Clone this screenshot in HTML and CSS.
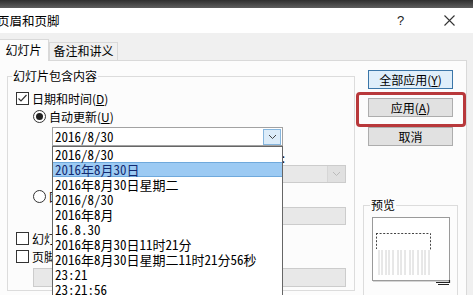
FILE: index.html
```html
<html>
  <head>
    <title>页眉和页脚</title>
    <meta charset="utf-8">
    <link rel="stylesheet" href="styles.css">
  </head>
  <body>
    <div class="topbar"></div>
    <div class="titlebar">
      <span class="title">页眉和页脚</span>
      <span class="help">?</span>
      <svg class="close" width="11" height="11" viewBox="0 0 11 11"><path d="M0.5 0.5 L10.5 10.5 M10.5 0.5 L0.5 10.5" stroke="#333" stroke-width="1.1"/></svg>
    </div>

    <div class="tabs">
      <div class="tab active">幻灯片</div>
      <div class="tab">备注和讲义</div>
    </div>

    <div class="panel">
      <fieldset class="group content">
        <legend>幻灯片包含内容</legend>
        <div class="fields">
          <div class="row r-date">
            <svg class="box" width="13" height="13" viewBox="0 0 13 13"><rect x="0.5" y="0.5" width="12" height="12" fill="#fff" stroke="#333"/><path d="M2.5 6.5 L5 9 L10.5 3" fill="none" stroke="#333" stroke-width="1.2"/></svg>
            <span>日期和时间(<u>D</u>)</span>
          </div>
          <div class="row sub r-auto">
            <svg class="radio" width="13" height="13" viewBox="0 0 13 13"><circle cx="6.5" cy="6.5" r="6" fill="#fff" stroke="#333"/><circle cx="6.5" cy="6.5" r="3.5" fill="#222"/></svg>
            <span>自动更新(<u>U</u>)</span>
          </div>
          <div class="combo-wrap">
            <div class="combo main">
              <span class="value">2016/8/30</span>
              <span class="arrow"><svg width="9" height="6" viewBox="0 0 9 6"><path d="M1 1 L4.5 4.5 L8 1" stroke="#444" fill="none"/></svg></span>
            </div>
            <ul class="droplist">
              <li>2016/8/30</li>
              <li class="picked">2016年8月30日</li>
              <li>2016年8月30日星期二</li>
              <li>2016/8/30</li>
              <li>2016年8月</li>
              <li>16.8.30</li>
              <li>2016年8月30日11时21分</li>
              <li>2016年8月30日星期二11时21分56秒</li>
              <li>23:21</li>
              <li>23:21:56</li>
            </ul>
          </div>
          <div class="lang-grid">
            <span>语言(国家/地区)(<u>L</u>):</span>
            <span>日历类型(<u>C</u>):</span>
            <div class="combo off">中文(中国)<span class="arrow"><svg width="9" height="6" viewBox="0 0 9 6"><path d="M1 1 L4.5 4.5 L8 1" stroke="#bbb" fill="none"/></svg></span></div>
            <div class="combo off">公历<span class="arrow"><svg width="9" height="6" viewBox="0 0 9 6"><path d="M1 1 L4.5 4.5 L8 1" stroke="#bbb" fill="none"/></svg></span></div>
          </div>
          <div class="row sub r-fixed">
            <svg class="radio" width="13" height="13" viewBox="0 0 13 13"><circle cx="6.5" cy="6.5" r="6" fill="#fff" stroke="#333"/></svg>
            <span>固定(<u>X</u>)</span>
          </div>
          <div class="textbox fixed-box">2016/8/30</div>
          <div class="row r-num">
            <svg class="box" width="13" height="13" viewBox="0 0 13 13"><rect x="0.5" y="0.5" width="12" height="12" fill="#fff" stroke="#333"/></svg>
            <span>幻灯片编号(<u>N</u>)</span>
          </div>
          <div class="row r-foot">
            <svg class="box" width="13" height="13" viewBox="0 0 13 13"><rect x="0.5" y="0.5" width="12" height="12" fill="#fff" stroke="#333"/></svg>
            <span>页脚(<u>F</u>)</span>
          </div>
          <div class="textbox foot-box"></div>
        </div>
      </fieldset>

      <div class="side">
        <button class="btn default">全部应用(<u>Y</u>)</button>
        <span class="mark"><button class="btn">应用(<u>A</u>)</button></span>
        <button class="btn cancel">取消</button>

        <fieldset class="group preview">
          <legend>预览</legend>
          <svg class="page" width="80" height="72" viewBox="0 0 80 72">
            <rect x="0.5" y="0.5" width="77" height="63" fill="#fff" stroke="#9a9a9a"/>
            <path d="M1 64.5 H78" stroke="#d4d4d4"/>
            <path d="M4.5 16 V32 M4 16.5 H58.5 V33" fill="none" stroke="#444" stroke-dasharray="2 1.6"/>
            <path d="M7 33 V58 M10 33 V58 M14 33 V58 M17 33 V58 M21 33 V58 M26 33 V58 M29 33 V58 M33 33 V58 M38 33 V58 M41 33 V58 M46 33 V58 M50 33 V58 M53 33 V58 M57 33 V58" stroke="#d0d0d0"/>
            <path d="M64 65.5 H77.5 V63 M66 67.5 H77" stroke="#222" stroke-width="1.2" fill="none"/>
          </svg>
        </fieldset>
      </div>
    </div>
  </body>
</html>
```

FILE: styles.css
```css
*{
  box-sizing: border-box;
}

body{
  margin: 0;
  width: 473px;
  height: 295px;
  overflow: hidden;
  background-color: #f0f0f0;
  color: #000;
  font-family: "Noto Sans CJK SC", "Microsoft YaHei", sans-serif;
  font-size: 12px;
}

u{
  text-decoration-thickness: 1px;
  text-underline-offset: 1px;
}

/* window chrome */
.topbar{
  height: 8px;
  background: linear-gradient(#2f2f2f, #5e5e5e);
}

.titlebar{
  height: 25px;
  background-color: #fff;
  display: flex;
  align-items: center;
}

.title{
  flex: 1;
  margin-left: -3px;
  font-size: 12.5px;
}

.help{
  width: 8px;
  margin-right: 39px;
  font-family: "Liberation Sans", sans-serif;
  font-size: 13px;
  color: #222;
}

.close{
  margin-right: 18px;
}

/* tabs */
.tabs{
  height: 27px;
  display: flex;
  align-items: flex-end;
  margin-left: -2px;
}

.tab{
  width: 69px;
  height: 18px;
  line-height: 16px;
  text-align: center;
  border: 1px solid #d9d9d9;
  border-bottom: none;
  background-color: #f0f0f0;
}

.tab.active{
  position: relative;
  z-index: 1;
  width: 51px;
  height: 22px;
  line-height: 20px;
  margin-bottom: -1px;
  background-color: #fcfcfc;
}

.panel{
  margin-left: -1px;
  width: 468px;
  height: 240px;
  border: 1px solid #d9d9d9;
  background-color: #fcfcfc;
  display: flex;
  align-items: flex-start;
}

/* group boxes */
.group{
  margin: 0;
  padding: 0;
  border: 1px solid #dcdcdc;
  min-width: 0;
}

.group legend{
  margin-left: 4px;
  padding: 0 1px;
  line-height: 16px;
}

.content{
  width: 348px;
  margin: 7px 0 0 7px;
}

.fields{
  padding: 0 0 3px 8px;
}

.row{
  height: 16px;
  display: flex;
  align-items: center;
  gap: 3px;
}

.row.sub{
  padding-left: 17px;
}

.r-date{ margin-top: 6px; }
.r-auto{ margin-top: 2px; }
.r-fixed{ margin-top: 5px; }
.r-num{ margin-top: 5px; }
.r-foot{ margin-top: 2px; }

/* combo + open list */
.combo-wrap{
  position: relative;
  margin: 3px 0 0 36px;
  width: 231px;
}

.combo{
  height: 19px;
  display: flex;
  align-items: center;
  border: 1px solid #a2a2a2;
  background-color: #fff;
  font-family: "Noto Sans Mono CJK SC", "Noto Sans CJK SC", monospace;
  font-size: 13px;
  padding-left: 2px;
}

.combo .value{
  flex: 1;
}

.combo .arrow{
  width: 18px;
  height: 16px;
  margin-right: 1px;
  display: flex;
  align-items: center;
  justify-content: center;
  border: 1px solid #86b6de;
  background-color: #dcecf9;
}

.droplist{
  position: absolute;
  left: 0;
  top: 19px;
  width: 231px;
  margin: 0;
  padding: 0;
  list-style: none;
  border: 1px solid #666;
  background-color: #fff;
  font-family: "Noto Sans Mono CJK SC", "Noto Sans CJK SC", monospace;
  font-size: 13px;
}

.droplist li{
  height: 15px;
  line-height: 15px;
  padding-left: 2px;
  white-space: nowrap;
}

.droplist li.picked{
  background-color: #9ccaf3;
  color: #132a70;
  box-shadow: inset 0 1px 0 #6fa9dc, inset 0 -1px 0 #6fa9dc;
}

.lang-grid{
  margin: 3px 0 0 36px;
  display: grid;
  grid-template-columns: 160px 128px;
  grid-template-rows: 16px 18px;
  column-gap: 6px;
  align-items: center;
}

.combo.off{
  height: 18px;
  justify-content: space-between;
  font-family: "Noto Sans CJK SC", sans-serif;
  font-size: 12px;
  color: #9a9a9a;
  border-color: #cccccc;
  background-color: #e8e8e8;
}

.combo.off .arrow{
  height: 16px;
  margin-right: 0;
  border: none;
  border-left: 1px solid #d6d6d6;
  background-color: #e0e0e0;
}

.textbox{
  height: 18px;
  border: 1px solid #cccccc;
  background-color: #e8e8e8;
  color: #9a9a9a;
  padding-left: 2px;
  line-height: 16px;
}

.fixed-box{
  margin: 3px 0 0 36px;
  width: 294px;
}

.foot-box{
  margin: 4px 0 0 17px;
  width: 313px;
  height: 19px;
}

/* right column */
.side{
  width: 95px;
  margin-left: 8px;
  display: flex;
  flex-direction: column;
  align-items: flex-start;
}

.btn{
  display: block;
  width: 85px;
  height: 19px;
  margin: 9px 0 0 5px;
  padding: 0;
  border: 1px solid #adadad;
  background-color: #e1e1e1;
  font-family: "Noto Sans CJK SC", sans-serif;
  font-size: 12px;
  line-height: 16px;
  color: #000;
}

.btn.default{
  border-color: #3b76a8;
  background-color: #dfeefa;
}

.mark{
  position: relative;
}

.mark::after{
  content: "";
  position: absolute;
  top: 3px;
  left: -7px;
  right: -13px;
  bottom: -10px;
  border: 3px solid #b8383b;
  border-radius: 4px;
}

.btn.cancel{
  margin-top: 10px;
}

.preview{
  width: 95px;
  height: 120px;
  margin-top: 51px;
}

.preview legend{
  margin-left: 6px;
}

.page{
  display: block;
  margin: 4px 0 0 8px;
}
```
